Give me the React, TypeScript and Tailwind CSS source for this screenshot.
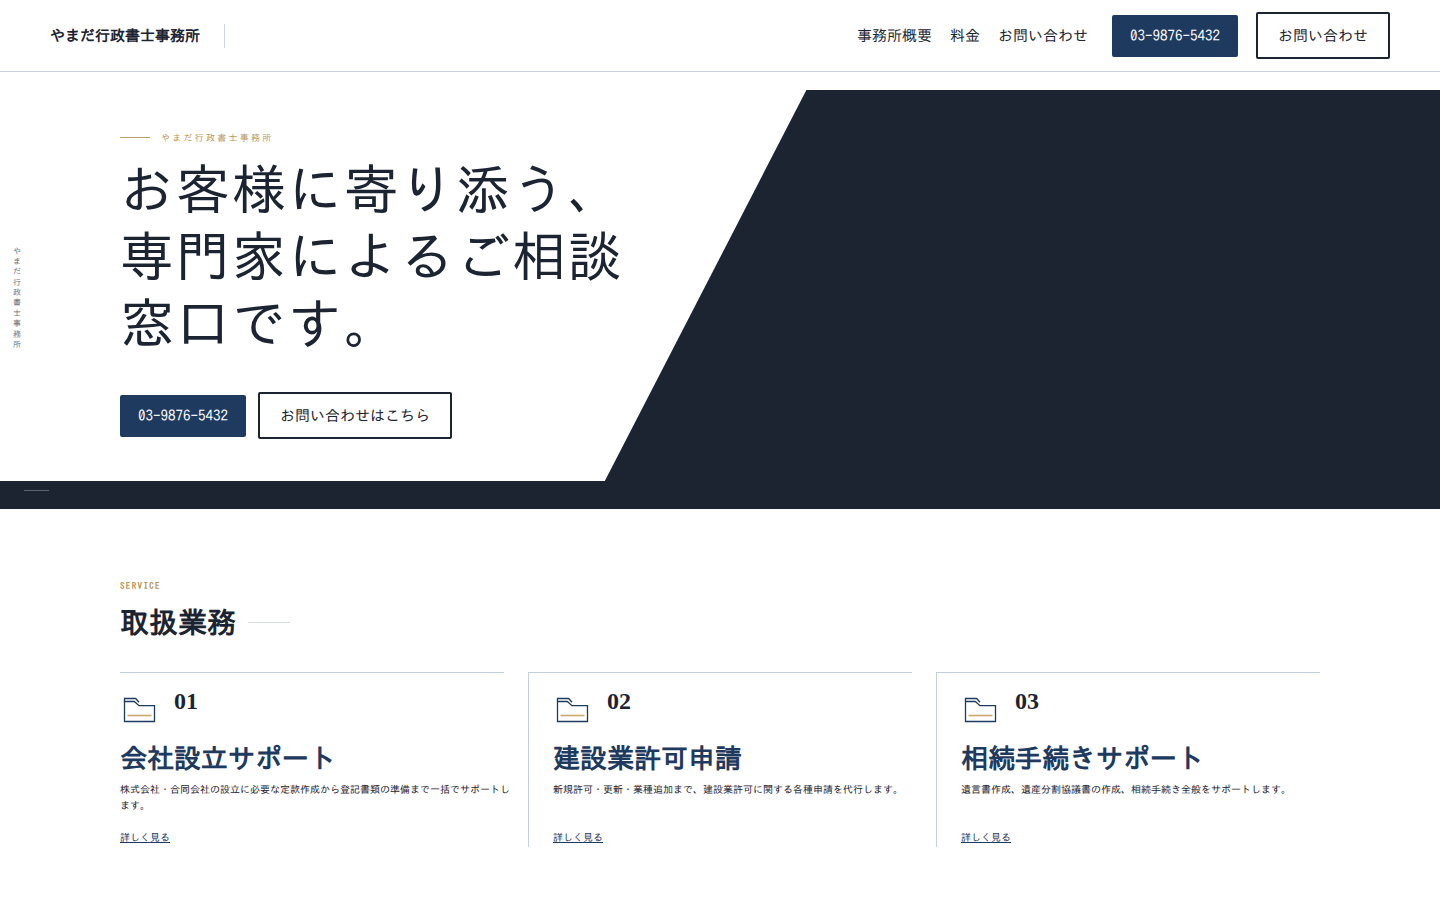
const services = [
  {
    no: "01",
    title: "会社設立サポート",
    text: "株式会社・合同会社の設立に必要な定款作成から登記書類の準備まで一括でサポートします。",
  },
  {
    no: "02",
    title: "建設業許可申請",
    text: "新規許可・更新・業種追加まで、建設業許可に関する各種申請を代行します。",
  },
  {
    no: "03",
    title: "相続手続きサポート",
    text: "遺言書作成、遺産分割協議書の作成、相続手続き全般をサポートします。",
  },
];

function FolderIcon() {
  return (
    <svg className="w-[42px] h-[42px] shrink-0" viewBox="0 0 42 42" fill="none" aria-hidden="true">
      <path d="M4.5 11.5h9.8l4.7 4.2h15.5v15.8h-30z" stroke="#1f3a5f" strokeWidth="1.3" />
      <path d="M4.5 11.5v-3h11.2l3.3 3.8" stroke="#1f3a5f" strokeWidth="1.3" />
      <path d="M7.5 25.5h24" stroke="#c9a96e" strokeWidth="1.6" />
    </svg>
  );
}

function PhoneButton() {
  return (
    <a
      href="tel:03-9876-5432"
      className="flex h-[42px] items-center rounded-xs bg-[#1f3a5f] px-[18px] text-[15px] leading-6 text-white"
    >
      03-9876-5432
    </a>
  );
}

function OutlineButton({ label }: { label: string }) {
  return (
    <a
      href="#contact"
      className="flex h-[47px] items-center rounded-xs border-2 border-[#1c2431] bg-white px-5 text-[15px] leading-6"
    >
      {label}
    </a>
  );
}

export default function App() {
  return (
    <div
      lang="ja"
      className="min-h-screen bg-white text-[#1c2431] font-['IPAGothic','Noto_Sans_CJK_JP',sans-serif]"
    >
      <header className="flex items-center justify-between border-b border-[#cbd0dc] px-[50px] py-3">
        <div className="flex items-center gap-6">
          <a href="#top" className="text-[15px] leading-6 font-bold">やまだ行政書士事務所</a>
          <span className="h-6 w-px bg-[#cbd5e1]"></span>
        </div>
        <div className="flex items-center gap-6">
          <nav className="flex gap-[18px] text-[15px] leading-6">
            <a href="#about">事務所概要</a>
            <a href="#price">料金</a>
            <a href="#contact">お問い合わせ</a>
          </nav>
          <div className="flex items-center gap-[18px]">
            <PhoneButton />
            <OutlineButton label="お問い合わせ" />
          </div>
        </div>
      </header>

      <main>
        <section id="top" className="relative mt-[18px] bg-[#1c2431] pb-7">
          <div className="bg-white pt-10 pb-[42px] [clip-path:polygon(0_0,56%_0,42%_100%,0_100%)]">
            <div className="mx-auto max-w-[1200px]">
              <p className="flex items-center gap-[11px] text-[9px] leading-[15px] tracking-[0.25em] text-[#b8975a]">
                <span className="h-px w-[30px] bg-[#b8a06a]"></span>
                やまだ行政書士事務所
              </p>
              <h1 className="mt-[10px] text-[54px] leading-[67px] tracking-[2px]">
                お客様に寄り添う、
                <br />
                専門家によるご相談
                <br />
                窓口です。
              </h1>
              <div className="mt-9 flex items-center gap-3">
                <PhoneButton />
                <OutlineButton label="お問い合わせはこちら" />
              </div>
            </div>
          </div>
          <span className="absolute top-[156px] left-3 text-[8px] leading-[10px] tracking-[0.3em] text-[#6b7280] [writing-mode:vertical-rl]">
            やまだ行政書士事務所
          </span>
          <span className="absolute bottom-[18px] left-6 h-px w-[25px] bg-[#5b6472]"></span>
        </section>

        <section className="mx-auto max-w-[1200px] pt-[70px] pb-[53px]">
          <p className="text-[9px] leading-[14px] font-bold tracking-[0.15em] text-[#b8975a]">SERVICE</p>
          <h2 className="mt-[11px] flex items-center gap-3 text-[29px] leading-9 font-bold">
            取扱業務
            <span className="h-px w-[42px] bg-[#d9dee6]"></span>
          </h2>
          <div className="mt-8 grid grid-cols-3 gap-6">
            {services.map((service, index) => (
              <article
                key={service.no}
                className={`flex flex-col border-t border-[#c5d0de] pt-[17px] pb-[2px] ${index > 0 ? "border-l pl-6" : ""}`}
              >
                <div className="flex gap-3">
                  <FolderIcon />
                  <span className="font-['Liberation_Serif',serif] text-2xl leading-[22px] font-bold">{service.no}</span>
                </div>
                <h3 className="mt-2 text-[27px] leading-9 font-bold text-[#1f3a5f]">{service.title}</h3>
                <p className="mt-[5px] -mr-2 mb-4 text-[10px] leading-4">{service.text}</p>
                <a href="#detail" className="mt-auto self-start text-[10px] leading-4 text-[#1f3a5f] underline">
                  詳しく見る
                </a>
              </article>
            ))}
          </div>
        </section>
      </main>
    </div>
  );
}
